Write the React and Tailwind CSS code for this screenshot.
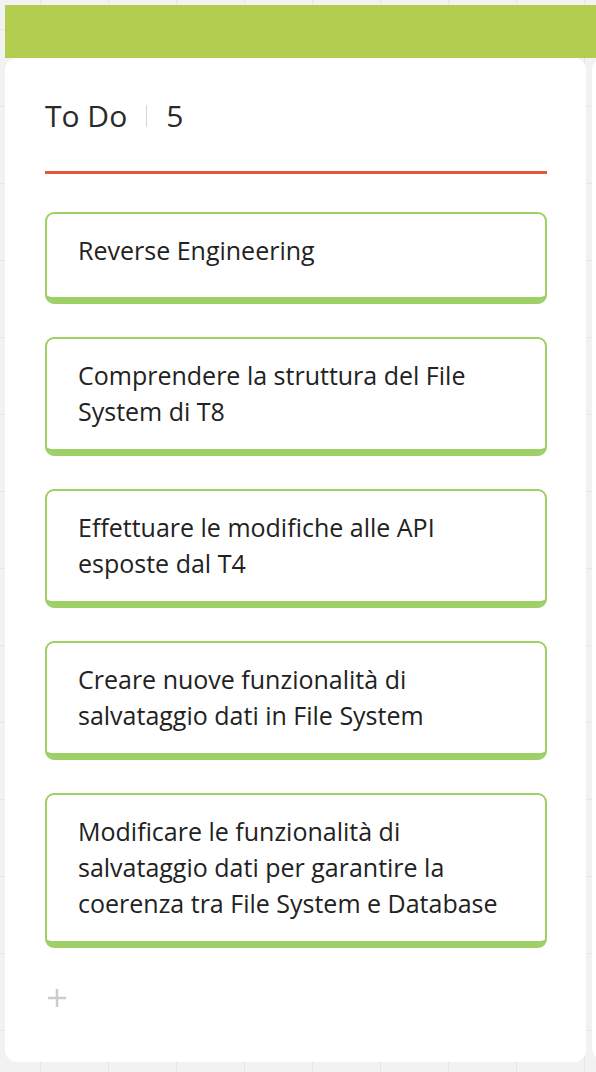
const tasks = [
  'Reverse Engineering',
  'Comprendere la struttura del File System di T8',
  'Effettuare le modifiche alle API esposte dal T4',
  'Creare nuove funzionalità di salvataggio dati in File System',
  'Modificare le funzionalità di salvataggio dati per garantire la coerenza tra File System e Database',
];

const TaskCard = ({ text }) => (
  <div className="min-h-[92px] rounded-[9px] border-2 border-b-[7px] border-[#9fd067] bg-white pl-[31px] pr-6 pt-[18px] pb-[20px]">
    <p className="text-[25px] leading-[36px] text-[#222222]">{text}</p>
  </div>
);

export default function App() {
  return (
    <div
      className="h-[1072px] w-[596px] overflow-hidden bg-[#f2f2f2] bg-[linear-gradient(to_right,#e6e6e6_1px,transparent_1px),linear-gradient(to_bottom,#e6e6e6_1px,transparent_1px)] [background-size:68px_77px] [background-position:40px_29px] pl-[5px] pt-[5px]"
      style={{ fontFamily: '"Open Sans", "Noto Sans", sans-serif' }}
    >
      <div className="h-[53px] w-[600px] bg-[#b3cd51]" />
      <div className="flex gap-[6px]">
        {/* column */}
        <div className="h-[1004px] w-[581px] shrink-0 rounded-xl bg-white pl-10 pr-[39px] pt-[38px]">
          <div className="flex items-center text-[30px] leading-[40px] text-[#2a2a2a]">
            <span>To Do</span>
            <span className="mx-[19px] h-[22px] w-px bg-[#d6d6d6]" />
            <span>5</span>
          </div>
          <div className="mt-[35px] h-[3px] bg-[#e8553e]" />
          <div className="mt-[38px] flex flex-col gap-[33px]">
            {tasks.map((t) => (
              <TaskCard key={t} text={t} />
            ))}
          </div>
          <div className="mt-[40px] pl-[2px]">
            <svg width="20" height="20" viewBox="0 0 20 20" className="text-[#cccccc]">
              <path d="M10 1v18M1 10h18" stroke="currentColor" strokeWidth="2.5" />
            </svg>
          </div>
        </div>
        {/* next column sliver */}
        <div className="h-[1002px] w-[40px] shrink-0 rounded-xl bg-white" />
      </div>
    </div>
  );
}
